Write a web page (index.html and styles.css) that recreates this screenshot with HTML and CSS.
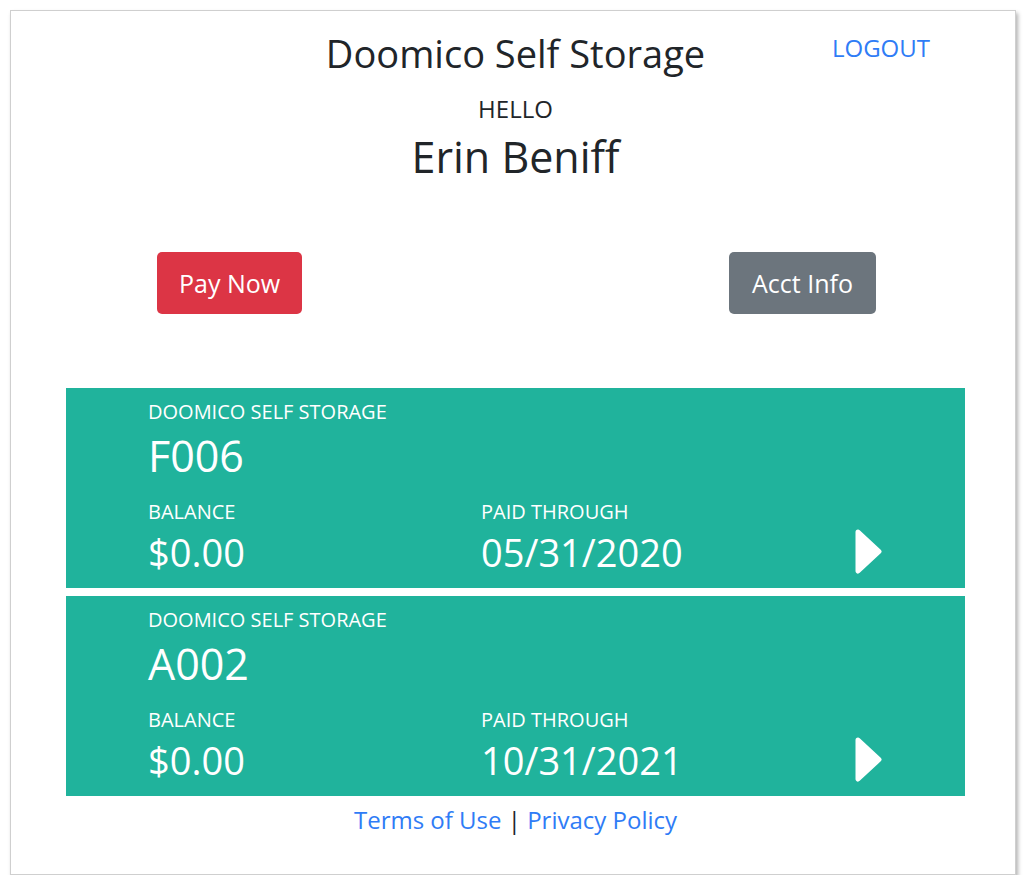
FILE: index.html
```html
<!DOCTYPE html>
<html lang="en">

<head>
    <meta charset="UTF-8">
    <meta name="viewport" content="width=device-width, initial-scale=1.0">
    <title>Doomico Self Storage</title>
    <link rel="stylesheet" href="styles.css">
</head>

<body>
    <div class="frame">
        <div class="page">
            <header class="top">
                <span></span>
                <h1 class="title">Doomico Self Storage</h1>
                <a class="logout" href="#">LOGOUT</a>
            </header>

            <div class="hello">HELLO</div>
            <div class="name">Erin Beniff</div>

            <div class="actions">
                <button class="btn btn-red">Pay Now</button>
                <button class="btn btn-gray">Acct Info</button>
            </div>

            <div class="units">
                <div class="unit">
                    <div class="facility">DOOMICO SELF STORAGE</div>
                    <div class="unit-no">F006</div>
                    <div class="unit-row">
                        <div class="col col-balance">
                            <div class="label">BALANCE</div>
                            <div class="value">$0.00</div>
                        </div>
                        <div class="col col-paid">
                            <div class="label">PAID THROUGH</div>
                            <div class="value">05/31/2020</div>
                        </div>
                        <svg class="arrow" width="27" height="45" viewBox="0 0 27 45">
                            <path d="M3 3 L24 22.5 L3 42 Z" fill="#fff" stroke="#fff" stroke-width="5" stroke-linejoin="round" />
                        </svg>
                    </div>
                </div>

                <div class="unit">
                    <div class="facility">DOOMICO SELF STORAGE</div>
                    <div class="unit-no">A002</div>
                    <div class="unit-row">
                        <div class="col col-balance">
                            <div class="label">BALANCE</div>
                            <div class="value">$0.00</div>
                        </div>
                        <div class="col col-paid">
                            <div class="label">PAID THROUGH</div>
                            <div class="value">10/31/2021</div>
                        </div>
                        <svg class="arrow" width="27" height="45" viewBox="0 0 27 45">
                            <path d="M3 3 L24 22.5 L3 42 Z" fill="#fff" stroke="#fff" stroke-width="5" stroke-linejoin="round" />
                        </svg>
                    </div>
                </div>
            </div>

            <footer class="footer">
                <a href="#">Terms of Use</a> | <a href="#">Privacy Policy</a>
            </footer>
        </div>
    </div>
</body>

</html>
```

FILE: styles.css
```css
body {
    margin: 0;
    font-family: "Open Sans", "Noto Sans", sans-serif;
    color: #212529;
    background-color: #ffffff;
}

.frame {
    margin: 10px 0 0 10px;
    width: 1004px;
    height: 863px;
    border: 1px solid #cfcfcf;
    box-shadow: 2px 3px 4px rgba(0, 0, 0, 0.3);
    background-color: #ffffff;
}

.page {
    width: 899px;
    margin-left: 55px;
    padding-top: 20px;
}

a {
    color: #2f7cf6;
    text-decoration: none;
}

.top {
    display: grid;
    grid-template-columns: 1fr auto 1fr;
    align-items: start;
}

.title {
    margin: 0;
    font-size: 38px;
    font-weight: 400;
    line-height: 1.2;
}

.logout {
    justify-self: end;
    margin: 3px 35px 0 0;
    font-size: 24px;
    line-height: 1.2;
}

.hello {
    margin-top: 18px;
    text-align: center;
    font-size: 24px;
    line-height: 1.2;
}

.name {
    margin-top: 8px;
    text-align: center;
    font-size: 43px;
    line-height: 1.2;
}

.actions {
    display: flex;
    justify-content: space-between;
    padding: 0 89px 0 91px;
    margin-top: 69px;
}

.btn {
    height: 62px;
    padding: 0 22px;
    font-family: inherit;
    font-size: 25px;
    color: #ffffff;
    border: none;
    border-radius: 5px;
    cursor: pointer;
}

.btn-red {
    background-color: #dc3545;
}

.btn-gray {
    background-color: #6c757d;
    padding: 0 23px;
}

.units {
    margin-top: 74px;
    display: flex;
    flex-direction: column;
    gap: 8px;
}

.unit {
    height: 200px;
    box-sizing: border-box;
    padding: 12px 83px 0 82px;
    background-color: #20b39c;
    color: #ffffff;
}

.facility {
    font-size: 20px;
    line-height: 1.2;
}

.unit-no {
    margin-top: 6px;
    font-size: 43px;
    line-height: 1.2;
}

.unit-row {
    display: flex;
    align-items: flex-end;
    margin-top: 18px;
}

.col-balance {
    width: 333px;
}

.col-paid {
    flex: 1;
}

.label {
    font-size: 20px;
    line-height: 1.2;
}

.value {
    margin-top: 6px;
    font-size: 38px;
    line-height: 1.2;
}

.arrow {
    margin-bottom: 1px;
}

.footer {
    margin-top: 10px;
    text-align: center;
    font-size: 24px;
    line-height: 1.2;
}
```
